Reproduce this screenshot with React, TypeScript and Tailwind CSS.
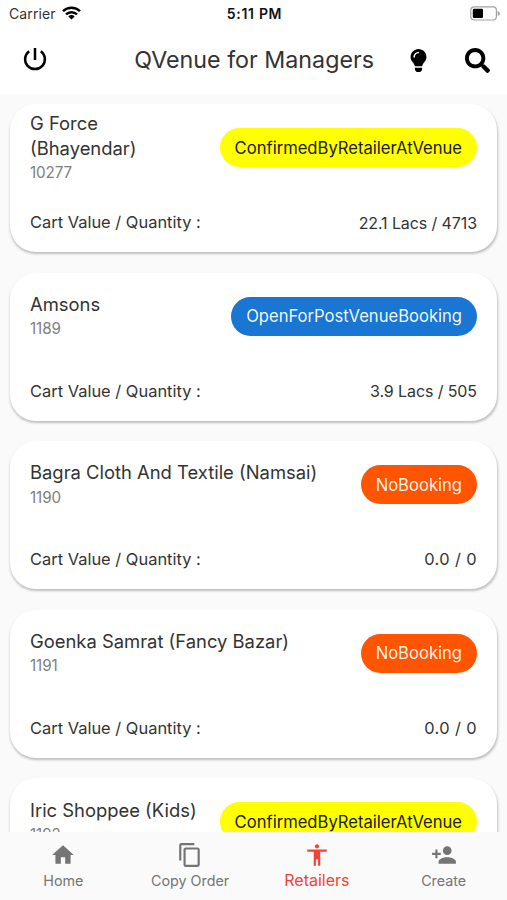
import type { ReactNode } from 'react';
import { FaLightbulb, FaSearch } from 'react-icons/fa';
import {
  MdAccessibility,
  MdContentCopy,
  MdHome,
  MdPersonAdd,
} from 'react-icons/md';

type Status = 'confirmed' | 'open' | 'none';

type Retailer = {
  name: ReactNode;
  code: string;
  status: Status;
  value?: string;
};

const retailers: Retailer[] = [
  {
    name: (
      <>
        G Force
        <br />
        (Bhayendar)
      </>
    ),
    code: '10277',
    status: 'confirmed',
    value: '22.1 Lacs / 4713',
  },
  { name: 'Amsons', code: '1189', status: 'open', value: '3.9 Lacs / 505' },
  {
    name: 'Bagra Cloth And Textile (Namsai)',
    code: '1190',
    status: 'none',
    value: '0.0 / 0',
  },
  {
    name: 'Goenka Samrat (Fancy Bazar)',
    code: '1191',
    status: 'none',
    value: '0.0 / 0',
  },
  { name: 'Iric Shoppee (Kids)', code: '1192', status: 'confirmed' },
];

const chips: Record<Status, { label: string; cls: string }> = {
  confirmed: {
    label: 'ConfirmedByRetailerAtVenue',
    cls: 'bg-[#ffff00] text-[#222200]',
  },
  open: { label: 'OpenForPostVenueBooking', cls: 'bg-[#1976d2] text-white/95' },
  none: { label: 'NoBooking', cls: 'bg-[#ff5500] text-white/95' },
};

function StatusBar() {
  return (
    <div className="grid h-[27px] shrink-0 grid-cols-3 items-center bg-white pr-[7px] pl-[9px] text-[#111]">
      <div className="flex items-center gap-[6px] text-[14px] tracking-[0.1px] text-[#333]">
        Carrier
        <svg
          className="-mt-[2px]"
          width="19"
          height="14"
          viewBox="0 0 19 14"
          aria-hidden
        >
          <path
            d="M1 5.2a12.2 12.2 0 0 1 17 0M4 8.4a8 8 0 0 1 11 0"
            fill="none"
            stroke="#000"
            strokeWidth="2.5"
          />
          <path d="M9.5 13.6 6.3 10.4a4.6 4.6 0 0 1 6.4 0z" fill="#000" />
        </svg>
      </div>
      <div className="text-center text-[14px] font-semibold tracking-[0.7px]">
        5:11 PM
      </div>
      <svg
        className="-mt-px justify-self-end"
        width="31"
        height="15"
        viewBox="0 0 31 15"
        aria-hidden
      >
        <rect
          x="1.8"
          y="0.8"
          width="25.6"
          height="13.2"
          rx="3.4"
          fill="none"
          stroke="#a3a3a3"
          strokeWidth="1.2"
        />
        <rect x="3.8" y="2.8" width="10.2" height="9.2" rx="1.2" fill="#000" />
        <path d="M28.6 5c1.6.5 2.2 1.3 2.2 2.4s-.6 1.9-2.2 2.4z" fill="#a3a3a3" />
      </svg>
    </div>
  );
}

function AppBar() {
  return (
    <header className="flex h-[67px] shrink-0 items-center bg-white pr-[17px] pb-px pl-[23px] text-black">
      <svg width="24" height="24" viewBox="0 0 24 24" aria-label="Log out">
        <path
          d="M6.2 3.2a9.9 9.9 0 1 0 11.6 0M12 0v12"
          fill="none"
          stroke="currentColor"
          strokeWidth="2.5"
        />
      </svg>
      <h1 className="flex-1 pr-[33px] text-right text-[23.25px] whitespace-nowrap text-[#333]">
        QVenue for Managers
      </h1>
      <FaLightbulb size={23} aria-label="Tips" />
      <FaSearch size={25} className="ml-[35px]" aria-label="Search" />
    </header>
  );
}

function RetailerCard({ name, code, status, value }: Retailer) {
  const chip = chips[status];
  return (
    <article className="h-[148px] shrink-0 rounded-[26px] bg-white px-5 shadow-[0.5px_2px_2.5px_rgba(0,0,0,0.24)]">
      <div className="flex h-[87px] items-center justify-between">
        <div className="pt-[2px]">
          <h2 className="text-[18.4px] leading-[24.4px] text-[#333]">{name}</h2>
          <p className="text-[15.2px] leading-[26px] tracking-[-0.1px] text-[#808080]">
            {code}
          </p>
        </div>
        <span
          className={`flex h-[39px] items-center rounded-full px-[15px] pt-px text-[16.6px] ${chip.cls}`}
        >
          {chip.label}
        </span>
      </div>
      {value ? (
        <div className="flex h-[63px] items-center justify-between text-[#333]">
          <span className="text-[16.45px]">Cart Value / Quantity :</span>
          <span
            className={
              value.includes('Lacs')
                ? 'text-[16px] tracking-[-0.1px]'
                : 'text-[16.4px] tracking-[0.4px]'
            }
          >
            {value}
          </span>
        </div>
      ) : null}
    </article>
  );
}

function NavItem({
  icon,
  label,
  active,
}: {
  icon: ReactNode;
  label: string;
  active?: boolean;
}) {
  return (
    <a
      className={`flex flex-1 flex-col items-center pt-[10px] ${
        active
          ? 'text-[16px] leading-[24px] text-[#f44336]'
          : 'text-[14.3px] leading-[26px] text-[#757575]'
      }`}
    >
      {icon}
      <span>{label}</span>
    </a>
  );
}

export default function App() {
  return (
    <div className="flex h-[900px] w-[507px] flex-col overflow-hidden bg-[#fafafa] font-['Inter',sans-serif]">
      <StatusBar />
      <AppBar />
      <main className="flex min-h-0 flex-1 flex-col gap-[20.6px] overflow-hidden px-[10px] pt-[10px]">
        {retailers.map((r) => (
          <RetailerCard key={r.code} {...r} />
        ))}
      </main>
      <nav className="flex h-[68px] shrink-0 bg-[#fafafa]">
        <NavItem icon={<MdHome size={26} />} label="Home" />
        <NavItem icon={<MdContentCopy size={26} />} label="Copy Order" />
        <NavItem icon={<MdAccessibility size={26} />} label="Retailers" active />
        <NavItem icon={<MdPersonAdd size={26} />} label="Create" />
      </nav>
    </div>
  );
}
